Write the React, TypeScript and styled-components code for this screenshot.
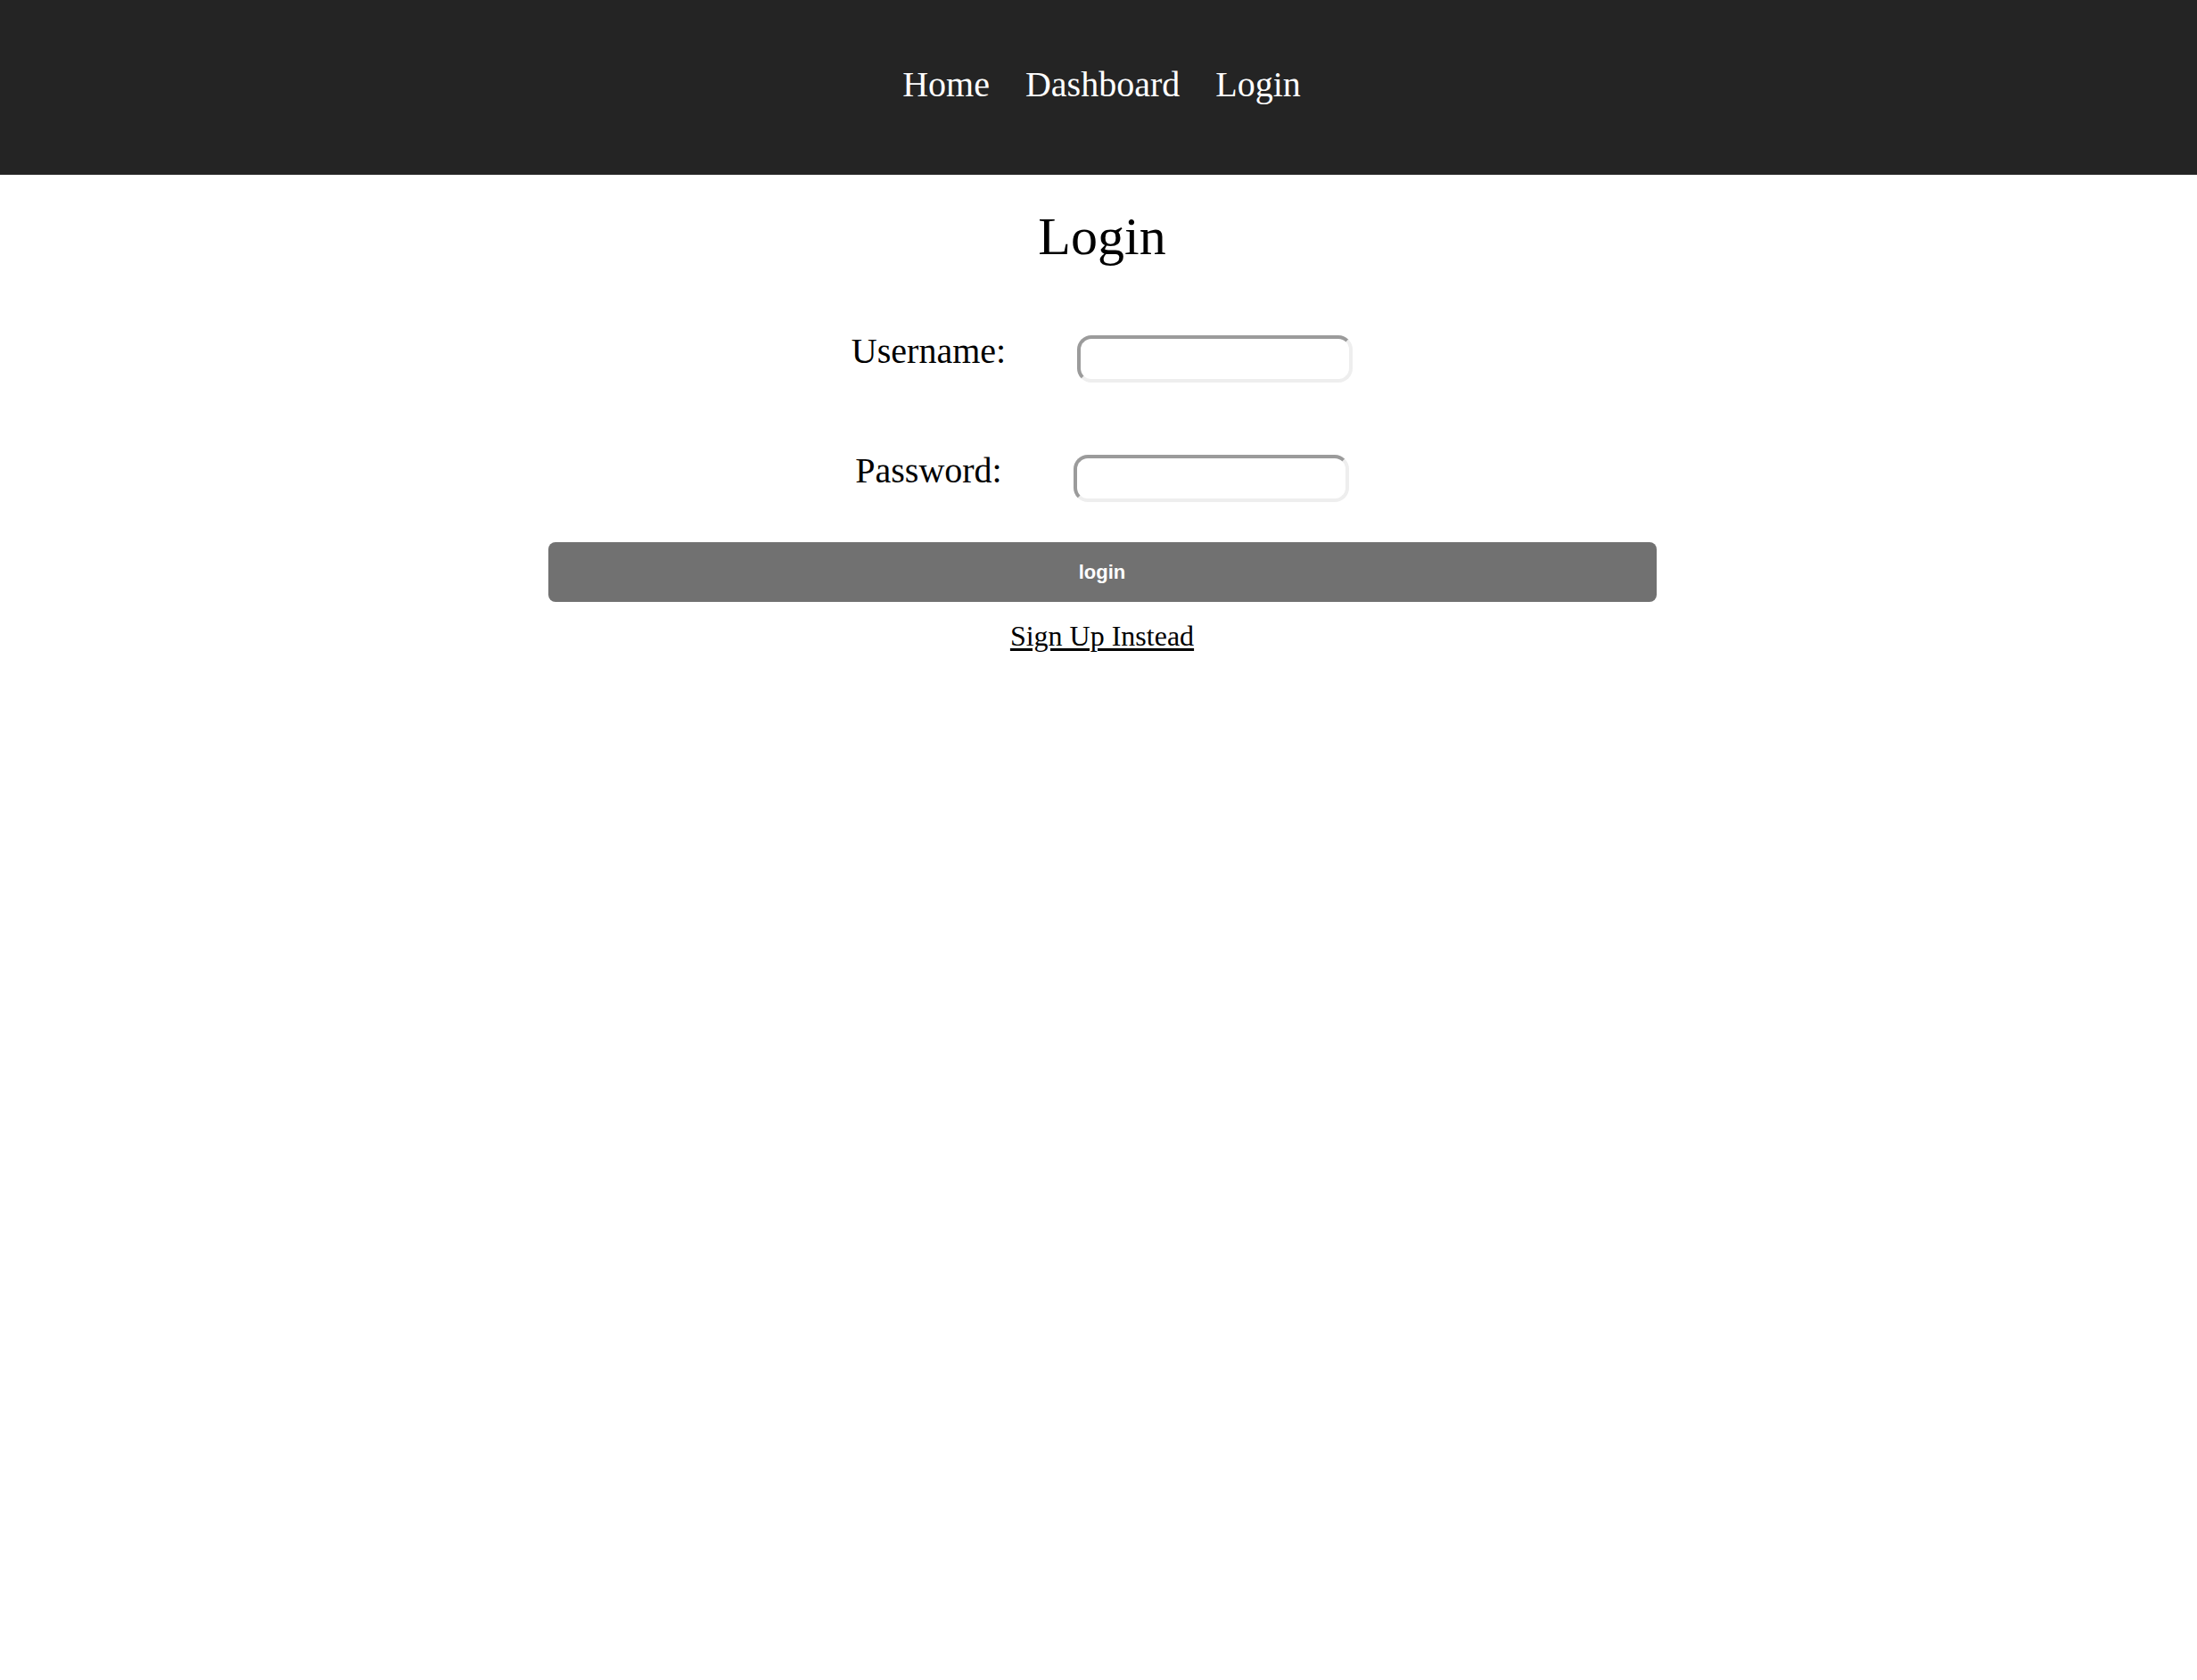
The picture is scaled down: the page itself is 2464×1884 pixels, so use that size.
import React from "react";
import styled, { createGlobalStyle } from "styled-components";

const GlobalStyle = createGlobalStyle`
  html, body {
    margin: 0;
    padding: 0;
    background: #ffffff;
    font-family: "Liberation Serif", "Times New Roman", serif;
  }
`;

const NavBar = styled.nav`
  background: #242424;
  height: 196px;
  box-sizing: border-box;
  padding: 72px 0 0 7px;
  display: flex;
  justify-content: center;
  align-items: flex-start;
  gap: 40px;
`;

const NavLink = styled.a`
  color: #ffffff;
  font-family: "Liberation Serif", "Times New Roman", serif;
  font-size: 40px;
  line-height: 46px;
  text-decoration: none;
`;

const Main = styled.main`
  display: flex;
  flex-direction: column;
  align-items: center;
  padding-left: 8px;
`;

const Title = styled.h1`
  margin: 35px 0 0;
  font-size: 60px;
  line-height: 69px;
  font-weight: normal;
  color: #000;
`;

const Form = styled.form`
  display: flex;
  flex-direction: column;
  align-items: center;
  margin-top: 71px;
`;

const Row = styled.div`
  display: flex;
  align-items: flex-start;
  margin-bottom: 76px;
  &:last-of-type {
    margin-bottom: 45px;
  }
`;

const Label = styled.label`
  font-size: 40px;
  line-height: 46px;
  color: #000;
  margin-right: 80px;
`;

const Input = styled.input`
  box-sizing: border-box;
  width: 309px;
  height: 53px;
  margin-top: 5px;
  border-width: 4px;
  border-style: solid;
  border-color: #9b9b9b #eeeeee #eeeeee #9b9b9b;
  border-radius: 16px;
  background: #fff;
  outline: none;
  font-size: 26px;
  padding: 0 10px;
`;

const SubmitButton = styled.button`
  width: 1243px;
  height: 67px;
  border: none;
  border-radius: 8px;
  background: #717171;
  color: #ffffff;
  font-family: "Liberation Sans", Arial, sans-serif;
  font-weight: bold;
  font-size: 22px;
  cursor: pointer;
`;

const SignUpLink = styled.a`
  margin-top: 20px;
  font-size: 32px;
  line-height: 37px;
  color: #000;
  text-decoration: underline;
  text-underline-offset: 3px;
`;

export default function App() {
  return (
    <>
      <GlobalStyle />
      <NavBar>
        <NavLink href="#">Home</NavLink>
        <NavLink href="#">Dashboard</NavLink>
        <NavLink href="#">Login</NavLink>
      </NavBar>
      <Main>
        <Title>Login</Title>
        <Form onSubmit={(e) => e.preventDefault()}>
          <Row>
            <Label htmlFor="username">Username:</Label>
            <Input id="username" type="text" />
          </Row>
          <Row>
            <Label htmlFor="password">Password:</Label>
            <Input id="password" type="password" />
          </Row>
          <SubmitButton type="submit">login</SubmitButton>
        </Form>
        <SignUpLink href="#">Sign Up Instead</SignUpLink>
      </Main>
    </>
  );
}
